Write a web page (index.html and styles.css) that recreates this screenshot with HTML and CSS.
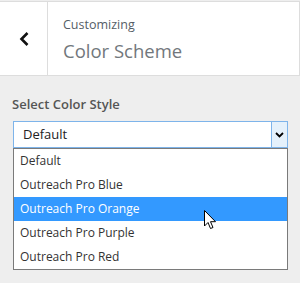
FILE: index.html
```html
<!DOCTYPE html>
<html>
<head>
<meta charset="utf-8">
<link rel="stylesheet" href="styles.css">
</head>
<body>
<div class="panel">
  <header class="head">
    <div class="back">
      <svg width="10" height="14" viewBox="0 0 10 14"><path d="M8.5 1 L2.5 7 L8.5 13" fill="none" stroke="#111" stroke-width="2.6"/></svg>
    </div>
    <div class="titles">
      <div class="sub">Customizing</div>
      <div class="title">Color Scheme</div>
    </div>
  </header>
  <section class="body">
    <div class="label">Select Color Style</div>
    <div class="select">
      <div class="value">Default</div>
      <div class="arrow">
        <svg width="9" height="6" viewBox="0 0 9 6"><path d="M1 1 L4.5 4.5 L8 1" fill="none" stroke="#000" stroke-width="1.8"/></svg>
      </div>
    </div>
    <ul class="list">
      <li>Default</li>
      <li>Outreach Pro Blue</li>
      <li class="hl">Outreach Pro Orange<svg class="cursor" width="13" height="20" viewBox="0 0 13 20"><path d="M0.5 0.5 L0.5 16 L4 12.5 L6.5 18.5 L9 17.5 L6.5 11.7 L11.5 11.7 Z" fill="#fff" stroke="#000" stroke-width="1"/></svg></li>
      <li>Outreach Pro Purple</li>
      <li>Outreach Pro Red</li>
    </ul>
  </section>
</div>
</body>
</html>
```
FILE: styles.css
```css
html, body {
  margin: 0;
  padding: 0;
}
body {
  width: 300px;
  height: 283px;
  background: #eeeeee;
  font-family: "Open Sans", "Noto Sans", sans-serif;
  overflow: hidden;
}
.panel {
  border-top: 1px solid #dddddd;
  margin-top: 1px;
}
.head {
  display: flex;
  height: 73px;
  background: #ffffff;
  border-bottom: 1px solid #dddddd;
  border-right: 1px solid #dddddd;
}
.back {
  width: 47px;
  border-right: 1px solid #dddddd;
  display: flex;
  align-items: center;
  justify-content: center;
}
.titles {
  padding: 13px 0 0 15px;
}
.sub {
  font-size: 12.5px;
  color: #555d66;
  line-height: 20px;
}
.title {
  font-size: 18.5px;
  color: #72777c;
  line-height: 26px;
  margin-top: 3px;
}
.body {
  padding: 19px 12px 0 13px;
}
.label {
  font-size: 13px;
  font-weight: 600;
  color: #555555;
  line-height: 18px;
  margin-bottom: 8px;
  margin-left: -1px;
}
.select {
  display: flex;
  height: 25px;
  border: 1px solid #7eb4ea;
  background: #fff;
}
.value {
  flex: 1;
  font-size: 13px;
  color: #222;
  line-height: 25px;
  padding-left: 9px;
}
.arrow {
  width: 15px;
  background: #e5f1fb;
  border-left: 1px solid #7eb4ea;
  display: flex;
  align-items: center;
  justify-content: center;
}
.list {
  list-style: none;
  margin: 0;
  padding: 0;
  border: 1px solid #7a7a7a;
  background: #fff;
}
.list li {
  height: 24px;
  line-height: 24px;
  font-size: 12px;
  color: #333;
  padding-left: 6px;
  position: relative;
}
.list li.hl {
  background: #3399ff;
  color: #fff;
}
.cursor {
  position: absolute;
  left: 190px;
  top: 13px;
}
```
